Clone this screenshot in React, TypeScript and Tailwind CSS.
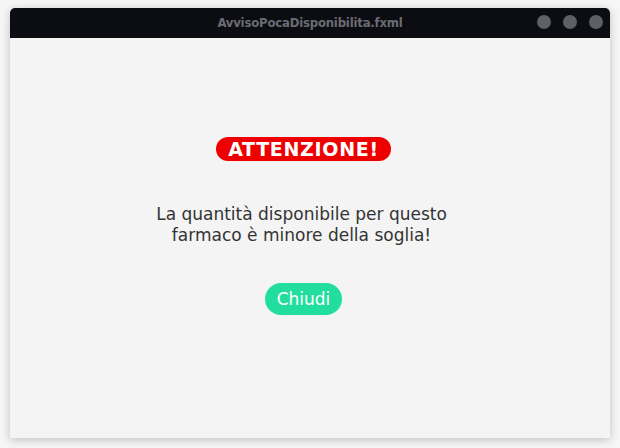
const dots = ["a", "b", "c"];

const App = () => {
  return (
    <div className="w-[620px] h-[448px] bg-[#f6f6f6] pt-[8px] pl-[10px]">
      <div className="w-[600px] h-[430px] flex flex-col rounded-t-[5px] overflow-hidden shadow-[0_2px_10px_rgba(0,0,0,0.22)]">
        <div className="h-[30px] bg-[#0c0d12] flex items-center relative shrink-0">
          <span className="flex-1 text-center text-[13px] font-semibold text-[#6b6b75] font-['DejaVu_Sans_Condensed','Liberation_Sans',sans-serif] tracking-[-0.2px]">
            AvvisoPocaDisponibilita.fxml
          </span>
          <div className="absolute right-[7px] top-[7px] flex gap-[12px]">
            {dots.map((d) => (
              <div key={d} className="size-[14px] rounded-full bg-[#5f5f67]" />
            ))}
          </div>
        </div>
        <main className="flex-1 bg-[#f4f4f4] flex flex-col items-center pr-[13px] font-['DejaVu_Sans',sans-serif]">
          <div className="mt-[99px] h-[24px] px-[12px] rounded-full bg-[#ee0000] flex items-center">
            <span className="text-white font-bold text-[19px] tracking-[0.7px] leading-none">ATTENZIONE!</span>
          </div>
          <p className="mt-[43px] mr-[4px] text-center text-[17px] leading-[21px] text-[#333333]">
            La quantità disponibile per questo
            <br />
            farmaco è minore della soglia!
          </p>
          <button className="mt-[37px] h-[32px] px-[12px] rounded-full bg-[#22de9e] text-white text-[17px] leading-none">
            Chiudi
          </button>
        </main>
      </div>
    </div>
  );
};

export default App;
